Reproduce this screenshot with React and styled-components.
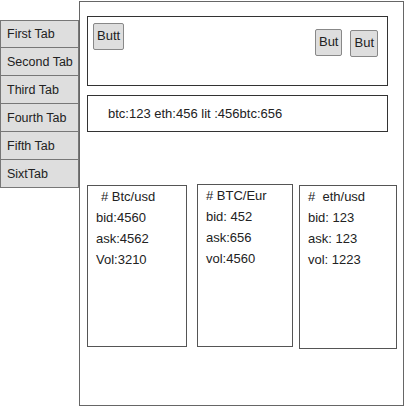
import React from "react";
import styled, { createGlobalStyle } from "styled-components";

const GlobalStyle = createGlobalStyle`
  body {
    margin: 0;
    background: #fff;
    font-family: "Liberation Sans", Arial, sans-serif;
    color: #222;
  }
`;

const Page = styled.div`
  display: flex;
  width: 404px;
  height: 407px;
  overflow: hidden;
`;

const Sidebar = styled.div`
  display: flex;
  flex-direction: column;
  width: 79px;
  padding-top: 20px;
  flex-shrink: 0;
`;

const Tab = styled.div`
  box-sizing: border-box;
  height: 28px;
  display: flex;
  align-items: center;
  padding-left: 6px;
  background-color: #dedede;
  border: 1px solid #777;
  border-top: ${props => (props.first ? "1px solid #777" : "none")};
  font-size: 12.5px;
  color: #222;
`;

const Main = styled.div`
  box-sizing: border-box;
  display: flex;
  flex-direction: column;
  width: 325px;
  height: 405px;
  margin-top: 1px;
  border: 1px solid #666;
  padding: 14px 15px 0 7px;
`;

const Toolbar = styled.div`
  box-sizing: border-box;
  display: flex;
  align-items: flex-start;
  height: 70px;
  border: 1.5px solid #333;
  padding: 6px 9px 0 5px;
`;

const ButtonGroup = styled.div`
  display: flex;
  align-items: flex-start;
  gap: 8px;
  margin-left: auto;
  margin-top: 6px;
`;

const Button = styled.button`
  box-sizing: border-box;
  height: 27px;
  padding: 0 3px 2px;
  margin-top: ${props => props.drop || 0}px;
  background-color: #dedede;
  border: 1px solid #888;
  border-radius: 2px;
  font-family: "Liberation Sans", Arial, sans-serif;
  font-size: 13px;
  color: #222;
`;

const Ticker = styled.div`
  box-sizing: border-box;
  display: flex;
  align-items: center;
  height: 37px;
  margin-top: 9px;
  padding-left: 20px;
  border: 1.5px solid #333;
  font-size: 13px;
`;

const CardRow = styled.div`
  display: flex;
  align-items: flex-start;
  margin-top: 52px;
  margin-right: -9px;
`;

const Card = styled.div`
  box-sizing: border-box;
  width: ${props => props.w}px;
  height: ${props => props.h}px;
  margin-left: ${props => props.gap || 0}px;
  margin-top: ${props => props.top || 0}px;
  border: 1px solid #555;
  padding: 0 0 0 8px;
  font-size: 13px;
  line-height: 21px;
  color: #222;
`;

const CardTitle = styled.div`
  white-space: pre;
  padding-left: ${props => props.indent || 0}px;
`;

const CardLine = styled.div`
  white-space: pre;
`;

const tabs = ["First Tab", "Second Tab", "Third Tab", "Fourth Tab", "Fifth Tab", "SixtTab"];

const cards = [
  { title: "# Btc/usd", indent: 5, w: 100, h: 162, top: 1, gap: 0, lines: ["bid:4560", "ask:4562", "Vol:3210"] },
  { title: "# BTC/Eur", indent: 0, w: 96, h: 163, top: 0, gap: 10, lines: ["bid: 452", "ask:656", "vol:4560"] },
  { title: "#  eth/usd", indent: 0, w: 98, h: 164, top: 1, gap: 6, lines: ["bid: 123", "ask: 123", "vol: 1223"] }
];

export default function App() {
  return (
    <Page>
      <GlobalStyle />
      <Sidebar>
        {tabs.map((t, i) => (
          <Tab key={t} first={i === 0}>
            {t}
          </Tab>
        ))}
      </Sidebar>
      <Main>
        <Toolbar>
          <Button>Butt</Button>
          <ButtonGroup>
            <Button>But</Button>
            <Button drop={1}>But</Button>
          </ButtonGroup>
        </Toolbar>
        <Ticker>btc:123 eth:456 lit :456btc:656</Ticker>
        <CardRow>
          {cards.map(c => (
            <Card key={c.title} w={c.w} h={c.h} top={c.top} gap={c.gap}>
              <CardTitle indent={c.indent}>{c.title}</CardTitle>
              {c.lines.map(l => (
                <CardLine key={l}>{l}</CardLine>
              ))}
            </Card>
          ))}
        </CardRow>
      </Main>
    </Page>
  );
}
